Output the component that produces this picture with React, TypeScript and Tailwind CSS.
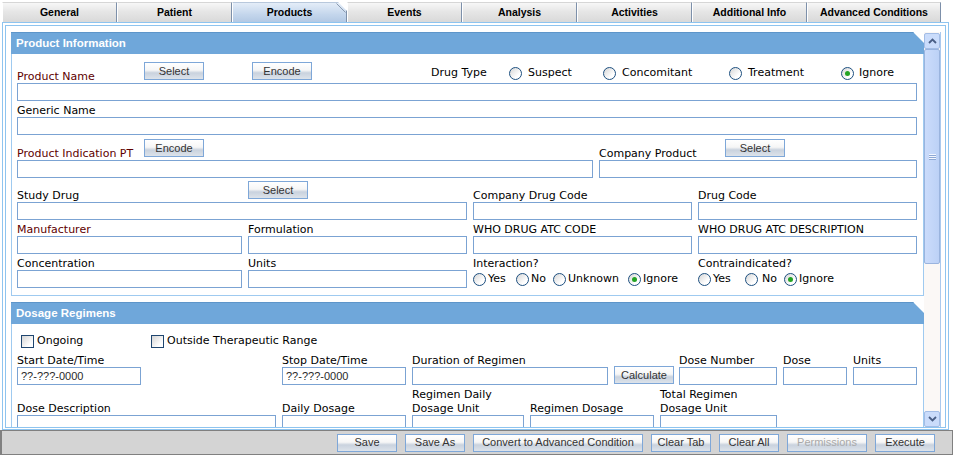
import React from 'react';

// Case form - "Products" tab

const lbl = "font-['DejaVu_Sans',Verdana,sans-serif] text-[11px] leading-[14px] whitespace-nowrap";
// field captions sit a pixel lower, right on top of their box
const cap = `${lbl} translate-y-[1px]`;

function Btn({
  children,
  w = 'w-[60px]',
  className = '',
  disabled = false,
}: {
  children: React.ReactNode;
  w?: string;
  className?: string;
  disabled?: boolean;
}) {
  return (
    <button
      type="button"
      className={`${w} h-[18px] shrink-0 border border-[#7ea7d8] bg-[linear-gradient(to_bottom,#ffffff_0%,#f6f6f6_45%,#c9d2de_62%,#dde3ea_100%)] font-['Liberation_Sans',Arial,sans-serif] text-[11px] leading-[15px] ${
        disabled ? 'text-[#a9a9a9]' : 'text-[#333333]'
      } ${className}`}
    >
      {children}
    </button>
  );
}

function TextBox({ w = 'w-full', value }: { w?: string; value?: string }) {
  return (
    <input
      readOnly
      value={value ?? ''}
      className={`${w} h-[18px] shrink-0 border border-[#7ba3d3] bg-white px-[3px] font-['Liberation_Sans',Arial,sans-serif] text-[11px] text-[#2a2a2a] outline-none`}
    />
  );
}

function Radio({ checked = false }: { checked?: boolean }) {
  return (
    <span className="flex h-[13px] w-[13px] shrink-0 items-center justify-center rounded-full border border-[#1d4f7f] bg-[linear-gradient(135deg,#d6d6d6,#ffffff_70%)]">
      {checked && <span className="h-[5px] w-[5px] rounded-full bg-[#23a323]" />}
    </span>
  );
}

function Check() {
  return (
    <span className="h-[13px] w-[13px] shrink-0 border border-[#1f4670] bg-[linear-gradient(135deg,#d4d4d4,#ffffff_75%)]" />
  );
}

function Opt({ text, checked, w, gap = 'ml-[2px]' }: { text: string; checked?: boolean; w: string; gap?: string }) {
  return (
    <span className={`${w} flex shrink-0 items-center`}>
      <Radio checked={checked} />
      <span className={`${lbl} ${gap}`}>{text}</span>
    </span>
  );
}

// label (optionally followed by a button) over a text box
function Field({
  label,
  w,
  h = 'h-[14px]',
  lw = '',
  req = false,
  btn,
  box = 'w-full',
  value,
}: {
  label: React.ReactNode;
  w: string;
  h?: string;
  lw?: string;
  req?: boolean;
  btn?: string;
  box?: string;
  value?: string;
}) {
  return (
    <div className={`${w} flex shrink-0 flex-col`}>
      <div className={`${h} flex items-end`}>
        <span className={`${cap} ${lw} ${req ? 'text-[#5e0000]' : 'text-black'}`}>{label}</span>
        {btn && <Btn className="mb-[3px]">{btn}</Btn>}
      </div>
      <TextBox w={box} value={value} />
    </div>
  );
}

function SectionHead({ title }: { title: string }) {
  return (
    <div className="flex h-[22px] shrink-0 items-center border-t border-[#5d95c9] bg-[#6fa7da] pl-[5px] [clip-path:polygon(0_0,calc(100%-11px)_0,100%_11px,100%_100%,0_100%)]">
      <span className="font-['Liberation_Sans',Arial,sans-serif] text-[11.5px] font-bold text-white">{title}</span>
    </div>
  );
}

const tabs = ['General', 'Patient', 'Products', 'Events', 'Analysis', 'Activities', 'Additional Info'];

function Tabs() {
  return (
    <div className="flex h-[22px] shrink-0 items-end pl-[2px]">
      {tabs.map((t) =>
        t === 'Products' ? (
          <div
            key={t}
            className="relative flex h-[20px] w-[115px] items-center justify-center border-l border-r border-t border-l-white border-r-[#7d90aa] border-t-[#b8c8dc] bg-[linear-gradient(to_bottom,#e4edf8,#c4d6ec_60%,#b3c9e4)] [clip-path:polygon(0_0,calc(100%-9px)_0,100%_9px,100%_100%,0_100%)]"
          >
            <span className="font-['Liberation_Sans',Arial,sans-serif] text-[10.5px] font-bold text-black">{t}</span>
            <svg className="absolute right-0 top-0" width="10" height="10" viewBox="0 0 10 10">
              <path d="M0.5 0.5 L9.5 9.5" stroke="#8a9ab0" strokeWidth="1" />
            </svg>
          </div>
        ) : (
          <div
            key={t}
            className="flex h-[20px] w-[115px] items-center justify-center border-l border-r border-t border-l-white border-r-[#7d90aa] border-t-[#d6d6d6] bg-[linear-gradient(to_bottom,#f7f7f7,#e6e6e6_45%,#d9d9d9)]"
          >
            <span className="font-['Liberation_Sans',Arial,sans-serif] text-[10.5px] font-bold text-black">{t}</span>
          </div>
        )
      )}
      <div className="flex h-[20px] w-[134px] items-center justify-center border-l border-r border-t border-l-white border-r-[#7d90aa] border-t-[#d6d6d6] bg-[linear-gradient(to_bottom,#f7f7f7,#e6e6e6_45%,#d9d9d9)]">
        <span className="font-['Liberation_Sans',Arial,sans-serif] text-[10.5px] font-bold text-black">Advanced Conditions</span>
      </div>
    </div>
  );
}

function Chevron({ up }: { up?: boolean }) {
  return (
    <svg width="9" height="6" viewBox="0 0 9 6">
      <path d={up ? 'M1 5 L4.5 1.5 L8 5' : 'M1 1 L4.5 4.5 L8 1'} stroke="#4a5f86" strokeWidth="1.8" fill="none" />
    </svg>
  );
}

function ScrollBar() {
  return (
    <div className="flex w-[17px] shrink-0 flex-col border-r border-[#a9c9ee] bg-[#fbf8f6]">
      <div className="mt-[1px] flex h-[16px] shrink-0 items-center justify-center rounded-[2px] border border-[#a3bde6] bg-[#cadcfb]">
        <Chevron up />
      </div>
      <div className="flex h-[215px] shrink-0 items-center justify-center rounded-[2px] border border-[#9ab4de] bg-[linear-gradient(to_right,#cbdcfb,#bcd1f6)]">
        <div className="flex flex-col">
          <span className="h-[1px] w-[7px] bg-[#f2f6ff]" />
          <span className="h-[1px] w-[7px] bg-[#8ea8d4]" />
          <span className="h-[1px] w-[7px] bg-[#f2f6ff]" />
          <span className="h-[1px] w-[7px] bg-[#8ea8d4]" />
          <span className="h-[1px] w-[7px] bg-[#f2f6ff]" />
          <span className="h-[1px] w-[7px] bg-[#8ea8d4]" />
        </div>
      </div>
      <div className="flex-1" />
      <div className="flex h-[16px] shrink-0 items-center justify-center rounded-[2px] border border-[#a3bde6] bg-[#cadcfb]">
        <Chevron />
      </div>
    </div>
  );
}

function ProductInfo() {
  return (
    <div className="flex shrink-0 flex-col">
      <SectionHead title="Product Information" />
      <div className="flex flex-col gap-[2px] border-x border-b border-[#9fcaf0] bg-white pb-[7px] pl-[5px] pr-[6px] pt-[6px]">
        {/* product name + drug type */}
        <div className="flex flex-col">
          <div className="flex h-[23px] items-end">
            <span className={`${cap} w-[127px] text-[#5e0000]`}>Product Name</span>
            <Btn className="mb-[3px]">Select</Btn>
            <Btn className="mb-[3px] ml-[48px]">Encode</Btn>
            <div className="mb-[3px] ml-[119px] flex h-[14px] items-center">
              <span className={`${lbl} w-[78px]`}>Drug Type</span>
              <Opt text="Suspect" w="w-[94px]" gap="ml-[6px]" />
              <Opt text="Concomitant" w="w-[126px]" gap="ml-[6px]" />
              <Opt text="Treatment" w="w-[112px]" gap="ml-[6px]" />
              <Opt text="Ignore" checked w="w-[70px]" gap="ml-[5px]" />
            </div>
          </div>
          <TextBox />
        </div>

        <Field label="Generic Name" w="w-[900px]" />

        <div className="flex gap-[6px]">
          <Field label="Product Indication PT" req w="w-[576px]" h="h-[23px]" lw="w-[127px]" btn="Encode" />
          <Field label="Company Product" w="w-[318px]" h="h-[23px]" lw="w-[126px]" btn="Select" />
        </div>

        <div className="flex gap-[6px]">
          <Field label="Study Drug" w="w-[450px]" h="h-[22px]" lw="w-[231px]" btn="Select" />
          <Field label="Company Drug Code" w="w-[219px]" h="h-[22px]" />
          <Field label="Drug Code" w="w-[219px]" h="h-[22px]" />
        </div>

        <div className="flex gap-[6px]">
          <Field label="Manufacturer" req w="w-[225px]" />
          <Field label="Formulation" w="w-[219px]" />
          <Field label="WHO DRUG ATC CODE" w="w-[219px]" />
          <Field label="WHO DRUG ATC DESCRIPTION" w="w-[219px]" />
        </div>

        <div className="flex gap-[6px]">
          <Field label="Concentration" w="w-[225px]" />
          <Field label="Units" w="w-[219px]" />
          <div className="flex w-[219px] shrink-0 flex-col">
            <span className={cap}>Interaction?</span>
            <div className="flex h-[18px] items-center">
              <Opt text="Yes" w="w-[43px]" />
              <Opt text="No" w="w-[37px]" />
              <Opt text="Unknown" w="w-[75px]" />
              <Opt text="Ignore" checked w="w-[60px]" />
            </div>
          </div>
          <div className="flex w-[219px] shrink-0 flex-col">
            <span className={cap}>Contraindicated?</span>
            <div className="flex h-[18px] items-center">
              <Opt text="Yes" w="w-[47px]" />
              <Opt text="No" w="w-[39px]" gap="ml-[4px]" />
              <Opt text="Ignore" checked w="w-[70px]" />
            </div>
          </div>
        </div>
      </div>
    </div>
  );
}

function Dosage() {
  return (
    <div className="flex shrink-0 flex-col">
      <SectionHead title="Dosage Regimens" />
      <div className="flex flex-col border-x border-b border-[#9fcaf0] bg-white pb-[7px] pl-[5px] pr-[6px] pt-[10px]">
        <div className="flex h-[14px] items-center pl-[4px]">
          <span className="flex w-[130px] items-center">
            <Check />
            <span className={`${lbl} ml-[3px]`}>Ongoing</span>
          </span>
          <span className="flex items-center">
            <Check />
            <span className={`${lbl} ml-[3px]`}>Outside Therapeutic Range</span>
          </span>
        </div>

        <div className="mt-[5px] flex items-end">
          <Field label="Start Date/Time" w="w-[259px]" box="w-[124px]" value="??-???-0000" />
          <Field label="Stop Date/Time" w="w-[124px] ml-[6px]" value="??-???-0000" />
          <Field label="Duration of Regimen" w="w-[196px] ml-[6px]" />
          <Btn className="ml-[6px] mb-[1px]">Calculate</Btn>
          <Field label="Dose Number" w="w-[98px] ml-[5px]" />
          <Field label="Dose" w="w-[64px] ml-[6px]" />
          <Field label="Units" w="w-[64px] ml-[6px]" />
        </div>

        <div className="mt-[2px] flex gap-[6px]">
          <Field label="Dose Description" w="w-[259px]" h="h-[28px]" />
          <Field label="Daily Dosage" w="w-[124px]" h="h-[28px]" />
          <Field
            label={
              <>
                Regimen Daily
                <br />
                Dosage Unit
              </>
            }
            w="w-[112px]"
            h="h-[28px]"
          />
          <Field label="Regimen Dosage" w="w-[124px]" h="h-[28px]" />
          <Field
            label={
              <>
                Total Regimen
                <br />
                Dosage Unit
              </>
            }
            w="w-[117px]"
            h="h-[28px]"
          />
        </div>
      </div>
    </div>
  );
}

export default function App() {
  return (
    <div className="flex h-[455px] w-[953px] flex-col overflow-hidden bg-white">
      <Tabs />

      {/* double-ruled frame around the tab body */}
      <div className="ml-[2px] flex h-[408px] w-[947px] shrink-0 flex-col border border-[#8ec4ef] px-[2px] pb-[1px] pt-[2px]">
        <div className="flex min-h-0 flex-1 flex-col border border-[#8ec4ef] pl-[5px] pt-[6px]">
          <div className="flex min-h-0 w-[930px] flex-1">
            <div className="flex w-[913px] shrink-0 flex-col gap-[6px] overflow-hidden">
              <ProductInfo />
              <Dosage />
            </div>
            <ScrollBar />
          </div>
        </div>
      </div>

      {/* action bar */}
      <div className="flex h-[25px] shrink-0 items-center justify-end gap-[8px] border border-l-2 border-[#808080] bg-[#d4d4d4] pr-[17px]">
        <Btn>Save</Btn>
        <Btn>Save As</Btn>
        <Btn w="w-[170px]">Convert to Advanced Condition</Btn>
        <Btn>Clear Tab</Btn>
        <Btn>Clear All</Btn>
        <Btn w="w-[80px]" disabled>
          Permissions
        </Btn>
        <Btn>Execute</Btn>
      </div>
    </div>
  );
}
